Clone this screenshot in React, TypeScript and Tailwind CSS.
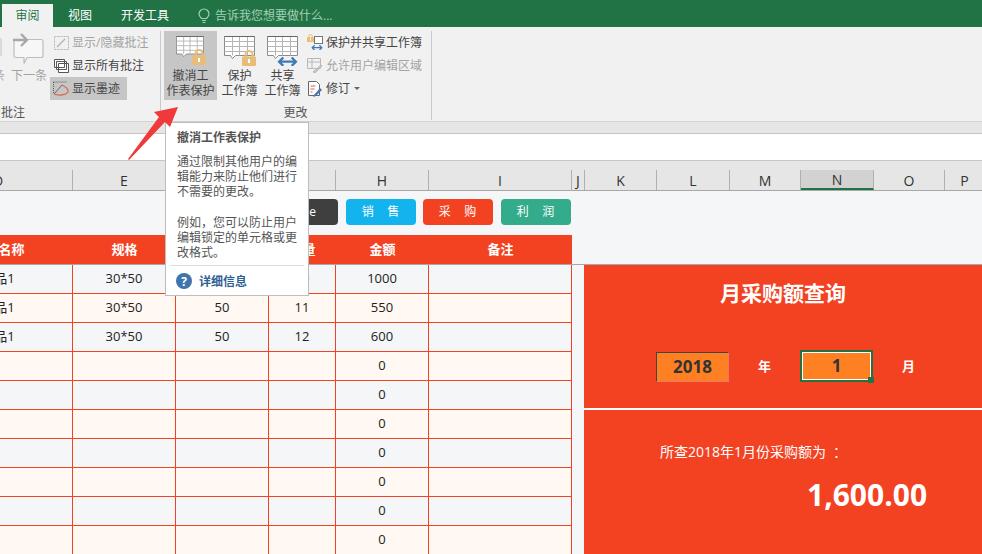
import React from "react";

const Sheet = ({ w = 31, h = 26 }: { w?: number; h?: number }) => (
  <svg width={w} height={h} viewBox="0 0 31 26" fill="none" stroke="#8a8a8a" strokeWidth="1" preserveAspectRatio="none">
    <path d="M.5.5h30v19h-19l-3 3-2-3h-6z" fill="#fff" />
    <path d="M.5 5.500h30M.5 10.500h30M.5 15.500h30M8.500.5v19M15.500.5v19M23.500.5v19" stroke="#b5b5b5" />
    <path d="M.5.5h30" stroke="#666" />
  </svg>
);

const Lock = ({ s = 14 }: { s?: number }) => (
  <svg width={s} height={(s * 16) / 14} viewBox="0 0 14 16" className="block">
    <path d="M3.500 8V4.500a3.500 3.500 0 0 1 7 0V8" fill="none" stroke="#e8bd78" strokeWidth="2" />
    <rect x="0" y="6.500" width="14" height="9.500" rx="1" fill="#e8bd78" />
    <rect x="6" y="9" width="2" height="4" fill="#fff" />
  </svg>
);

const Share = ({ w = 20 }: { w?: number }) => (
  <svg width={w} height={w * 0.45} viewBox="0 0 20 9" fill="none" stroke="#3d7ab8" strokeWidth="2.200" className="block">
    <path d="M2 4.500h16M6 .5 2 4.500l4 4M14 .5l4 4-4 4" />
  </svg>
);

const BigBtn = ({ l1, l2, active, children }: { l1: string; l2: string; active?: boolean; children: React.ReactNode }) => (
  <div className={`flex flex-col items-center shrink-0 h-[69px] ${active ? "bg-[#c6c6c6] w-[53px]" : "w-[41px]"}`}>
    <div className="relative w-[32px] h-[31px] mt-[5px]">{children}</div>
    <div className="mt-[1px] leading-[15px] text-[12px] text-[#444] text-center whitespace-nowrap">
      <div>{l1}</div>
      <div>{l2}</div>
    </div>
  </div>
);

const Row = ({ icon, text, gray, active, w }: { icon: React.ReactNode; text: React.ReactNode; gray?: boolean; active?: boolean; w?: string }) => (
  <div className={`flex items-center h-[23px] pl-[3px] text-[12px] whitespace-nowrap ${gray ? "text-[#a3a3a3]" : "text-[#444]"} ${active ? "bg-[#c6c6c6]" : ""} ${w ?? ""}`}>
    <div className="w-[16px] h-[16px] mr-[3px] flex items-center justify-center">{icon}</div>
    {text}
  </div>
);

const cols = ["D", "E", "F", "G", "H", "I", "J", "K", "L", "M", "N", "O", "P"];
const colW = [149, 103, 93, 67, 93, 143, 13, 72, 73, 71, 73, 71, 40];

const rows = [
  ["产品1", "30*50", "50", "20", "1000"],
  ["产品1", "30*50", "50", "11", "550"],
  ["产品1", "30*50", "50", "12", "600"],
  ["", "", "", "", "0"],
  ["", "", "", "", "0"],
  ["", "", "", "", "0"],
  ["", "", "", "", "0"],
  ["", "", "", "", "0"],
  ["", "", "", "", "0"],
  ["", "", "", "", "0"],
];

const tableCols = "grid grid-cols-[149px_103px_93px_67px_93px_143px]";

export default function App() {
  return (
    <div className="relative w-[982px] h-[554px] overflow-hidden bg-[#f4f6f8] [font-family:'Open_Sans','Noto_Sans_CJK_SC',sans-serif]">
      {/* Tabs */}
      <div className="h-[27px] bg-[#217346] flex items-end text-[12px] text-white">
        <div className="ml-[2px] w-[51px] h-[23px] bg-[#f1f1f1] text-[#217346] flex items-center justify-center">审阅</div>
        <div className="ml-[15px] w-[24px] h-[23px] flex items-center justify-center whitespace-nowrap">视图</div>
        <div className="ml-[29px] w-[48px] h-[23px] flex items-center justify-center whitespace-nowrap">开发工具</div>
        <div className="ml-[29px] h-[23px] flex items-center text-[#a3cfb5]">
          <svg width="12" height="16" viewBox="0 0 12 16" fill="none" stroke="#a3cfb5" strokeWidth="1.200" className="mr-[5px]">
            <path d="M3.500 10.500C2 9 1 8 1 6a5 5 0 0 1 10 0c0 2-1 3-2.500 4.500zM4 12.500h4M4.500 14.500h3" />
          </svg>
          告诉我您想要做什么...
        </div>
      </div>

      {/* Ribbon */}
      <div className="h-[95px] bg-[#f1f1f1] border-b border-[#d2d2d2] flex">
        <div className="relative w-[161px] h-[89px] mt-[4px] border-r border-[#c9c9c9] shrink-0 overflow-hidden">
          <svg width="3" height="20" viewBox="0 0 3 20" fill="none" stroke="#c4c4c4" className="absolute left-0 top-[7px]">
            <path d="M1 0v18" />
          </svg>
          <div className="flex h-[69px]">
            <div className="w-[50px] shrink-0 flex flex-col items-center">
              <svg width="31" height="33" viewBox="0 0 31 33" fill="none" stroke="#bdbdbd" strokeWidth="1.200" className="ml-[7px] mt-[2px]">
                <path d="M3 6.500h25a2 2 0 0 1 2 2v14a2 2 0 0 1-2 2H14l-3 6v-6H3a2 2 0 0 1-2-2v-14a2 2 0 0 1 2-2z" fill="#f7f7f7" />
                <path d="M0 7h14M8 1l6 6-6 6" stroke="#a8a8a8" strokeWidth="2.400" />
              </svg>
              <div className="mt-[2px] ml-[8px] text-[12px] leading-[15px] text-[#a3a3a3] whitespace-nowrap">下一条</div>
            </div>
            <div className="flex flex-col">
              <Row
                gray
                text="显示/隐藏批注"
                icon={
                  <svg width="15" height="14" viewBox="0 0 15 14" fill="none" stroke="#b5b5b5">
                    <path d="M.5.5h14v13H.5z" strokeDasharray="2 1" />
                    <path d="M3 11 11 3" strokeWidth="1.500" />
                  </svg>
                }
              />
              <Row
                text="显示所有批注"
                icon={
                  <svg width="15" height="14" viewBox="0 0 15 14" fill="#fff" stroke="#555">
                    <path d="M.5.500h10v8H.5zM2.500 2.500h10v8h-10zM4.500 4.500h10v9h-10z" />
                  </svg>
                }
              />
              <Row
                active
                w="w-[77px]"
                text="显示墨迹"
                icon={
                  <svg width="16" height="15" viewBox="0 0 16 15" fill="none">
                    <path d="M.5 1h13M.5 1v12" stroke="#555" strokeDasharray="1 1" />
                    <path d="M1 13 9 4" stroke="#666" />
                    <path d="M1 13c5 2 12 1 14-2 1-3-2-5-6-7" stroke="#d9644a" strokeWidth="1.200" />
                  </svg>
                }
              />
            </div>
          </div>
          <div className="mt-[5px] pl-[1px] text-[12px] leading-[15px] text-[#555]">批注</div>
          <div className="absolute left-0 top-[37px] text-[12px] leading-[15px] text-[#a3a3a3] ml-[-7px]">条</div>
        </div>
        <div className="w-[271px] h-[89px] mt-[4px] border-r border-[#c9c9c9] shrink-0 pl-[3px]">
          <div className="flex h-[69px] gap-[2px]">
            <BigBtn active l1="撤消工" l2="作表保护">
              <div className="ml-[1px]"><Sheet w={28} h={24} /></div>
              <div className="absolute left-[17px] top-[13px]"><Lock s={14} /></div>
            </BigBtn>
            <BigBtn l1="保护" l2="工作簿">
              <Sheet />
              <div className="absolute left-[18px] top-[14px]"><Lock s={14} /></div>
            </BigBtn>
            <BigBtn l1="共享" l2="工作簿">
              <Sheet />
              <div className="absolute left-[10px] top-[21px]"><Share w={21} /></div>
            </BigBtn>
            <div className="flex flex-col ml-[-1px]">
              <Row
                text="保护并共享工作簿"
                icon={
                  <div className="relative w-[16px] h-[16px]">
                    <div className="absolute left-0 top-[-1px]"><Lock s={7} /></div>
                    <div className="absolute right-0 top-[1px] w-[9px] h-[8px] border border-[#777] bg-white" />
                    <div className="absolute left-[4px] top-[10px]"><Share w={12} /></div>
                  </div>
                }
              />
              <Row
                gray
                text="允许用户编辑区域"
                icon={
                  <svg width="16" height="15" viewBox="0 0 16 15" fill="none" stroke="#b8b8b8">
                    <path d="M.5.5h13v10H.5zM.5 4h13M5 .5v10" />
                    <path d="M6 14l8-7 1 1-7 7z" fill="#c8c8c8" />
                  </svg>
                }
              />
              <Row
                text={
                  <span className="flex items-center">
                    修订
                    <span className="ml-[4px] w-0 h-0 border-x-[3px] border-x-transparent border-t-[3px] border-t-[#666]" />
                  </span>
                }
                icon={
                  <svg width="16" height="16" viewBox="0 0 16 16" fill="none">
                    <path d="M1.500.5h8l3 3v11h-11z" fill="#fff" stroke="#666" />
                    <path d="M3.500 5h5M3.500 8h4M3.500 11h2" stroke="#d9644a" />
                    <path d="M7 14l6-7 2 2-6 6-3 1z" fill="#3d7ab8" />
                  </svg>
                }
              />
            </div>
          </div>
          <div className="mt-[5px] text-center text-[12px] leading-[15px] text-[#555] w-[263px]">更改</div>
        </div>
      </div>

      {/* band and formula bar */}
      <div className="h-[11px] bg-[#e6e6e6]" />
      <div className="h-[27px] bg-white border-t border-[#c6c6c6]" />

      {/* Column headers */}
      <div className="h-[31px] bg-[#e6e6e6] border-t border-[#c6c6c6] border-b border-b-[#a8a8a8] ml-[-76px] flex items-end">
        {cols.map((c, i) => (
          <div
            key={c}
            style={{ width: colW[i] }}
            className={`h-[20px] shrink-0 flex items-center justify-center text-[14px] text-[#333] border-r border-[#b0b0b0] ${
              c === "N" ? "bg-[#d2d2d2] border-b-2 border-b-[#217346]" : ""
            }`}
          >
            {c}
          </div>
        ))}
      </div>

      {/* Top strip: buttons + table header */}
      <div className="h-[73px] overflow-hidden">
        <div className="w-[572px] pt-[8px]">
          <div className="flex justify-end h-[26px] pr-[1px] text-[12px] text-white [&>div]:flex [&>div]:items-center [&>div]:justify-center [&>div]:rounded-[4px] [&>div]:w-[70px]">
            <div className="bg-[#3f3f3f] pr-[8px] mr-[8px]">Home</div>
            <div className="bg-[#13b4ee] tracking-[1px] whitespace-pre mr-[7px]">销   售</div>
            <div className="bg-[#f34222] tracking-[1px] whitespace-pre mr-[8px]">采   购</div>
            <div className="bg-[#34ab8a] tracking-[1px] whitespace-pre">利   润</div>
          </div>
          <div className={`${tableCols} ml-[-76px] mt-[10px] h-[29px] bg-[#f34222] text-white text-[13px] font-bold items-center text-center`}>
            <div>产品名称</div>
            <div>规格</div>
            <div>单价</div>
            <div>数量</div>
            <div>金额</div>
            <div>备注</div>
          </div>
        </div>
      </div>

      {/* Body */}
      <div className="flex border-t border-[#a8a8a8] h-[300px]">
        <div className="w-[584px] shrink-0 overflow-hidden">
          <div className="ml-[-76px] w-[648px]">
            {rows.map((r, i) => (
              <div
                key={i}
                className={`${tableCols} h-[29px] text-[13px] text-[#222] text-center border-b border-[#f34222] ${
                  i % 2 === 0 ? "bg-[#f4f6f8]" : "bg-[#fff8f3]"
                }`}
              >
                {[...r, ""].map((v, j) => (
                  <div key={j} className="flex items-center justify-center border-r border-[#f34222]">
                    {v}
                  </div>
                ))}
              </div>
            ))}
          </div>
        </div>

        <div className="w-[398px] bg-[#f34222] text-white shrink-0">
          <div className="h-[145px] border-b-2 border-white">
            <div className="pt-[13px] h-[86px] text-center text-[21px] font-bold leading-[30px]">月采购额查询</div>
            <div className="grid grid-cols-[72px_73px_71px_73px_71px] h-[30px] text-center text-[13px] font-bold items-center">
              <div />
              <div className="h-[30px] bg-[#ff8022] border-t border-l border-[#444] border-r-[#f0786a] border-b-[#f0786a] border-r border-b text-[17px] text-[#333] flex items-center justify-center">
                2018
              </div>
              <div>年</div>
              <div className="relative h-[32px] mt-[-1px] bg-[#ff8022] border-2 border-[#217346] outline outline-1 outline-offset-[-3px] outline-white text-[17px] text-[#333] flex items-center justify-center">
                1
                <div className="absolute right-[-3px] bottom-[-3px] w-[6px] h-[6px] bg-[#217346]" />
              </div>
              <div>月</div>
            </div>
          </div>
          <div className="pl-[76px] pt-[32px] text-[14px] leading-[20px] whitespace-nowrap">
            所查2018年1月份采购额为<span className="ml-[7px]">：</span>
          </div>
          <div className="mt-[15px] pl-[223px] text-[30px] leading-[36px] font-bold whitespace-nowrap">1,600.00</div>
        </div>
      </div>

      {/* Tooltip */}
      <div className="absolute left-[165px] top-[122px] w-[144px] h-[174px] bg-white border border-[#bdbdbd] flex flex-col pt-[7px] text-[12px] leading-[15px] text-[#555]">
        <div className="pl-[11px] font-bold text-[#555]">撤消工作表保护</div>
        <div className="pl-[11px] mt-[9px] w-[136px]">通过限制其他用户的编辑能力来防止他们进行不需要的更改。</div>
        <div className="pl-[11px] mt-[16px] w-[136px]">例如，您可以防止用户编辑锁定的单元格或更改格式。</div>
        <div className="mx-[4px] mt-[5px] border-t border-[#ddd]" />
        <div className="pl-[10px] mt-[7px] flex items-center font-bold text-[#2f5f96]">
          <div className="w-[16px] h-[16px] rounded-full bg-[#3f74ac] text-white text-[12px] flex items-center justify-center mr-[7px]">?</div>
          详细信息
        </div>
      </div>

      {/* Annotation arrow */}
      <svg className="absolute left-[125px] top-[103px]" width="58" height="60" viewBox="0 0 58 60">
        <path d="M53 4 29 9l5 5L3 56l1 1 36-38 5 5z" fill="#f0393a" />
      </svg>
    </div>
  );
}
